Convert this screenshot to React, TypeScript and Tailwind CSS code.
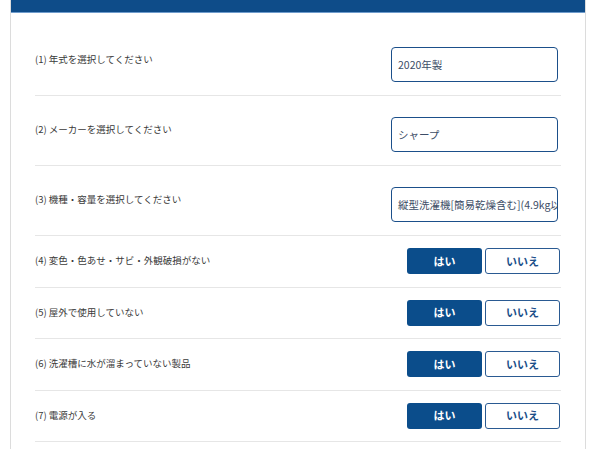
import React from "react";

const font = { fontFamily: '"Noto Sans CJK JP", "Noto Sans", sans-serif' };

function InputRow({ label, value }: { label: string; value: string }) {
  return (
    <div className="flex items-center justify-between border-b border-[#e6e6e6] pt-[12px] pb-[13px]">
      <div className="text-[9.5px] text-[#3a3a3a] leading-none">{label}</div>
      <div className="pt-[9px] pr-[3px]">
        <div className="w-[167px] h-[35px] border-[1.5px] border-[#1b4f8a] rounded-[4px] flex items-center pl-[6px] overflow-hidden">
          <span className="text-[10.5px] text-[#3d4d66] whitespace-nowrap">{value}</span>
        </div>
      </div>
    </div>
  );
}

function YesNoRow({ label }: { label: string }) {
  return (
    <div className="flex items-center justify-between border-b border-[#e6e6e6] pt-[12px] pb-[12.5px]">
      <div className="text-[9.5px] text-[#3a3a3a] leading-none">{label}</div>
      <div className="flex gap-[3px] pr-[1px]">
        <div className="w-[75px] h-[26px] bg-[#0b4d8b] rounded-[3px] flex items-center justify-center text-white text-[11px] font-bold">
          はい
        </div>
        <div className="w-[75px] h-[26px] border-[1.5px] border-[#2a5a92] rounded-[3px] bg-white flex items-center justify-center text-[#1b4f8a] text-[11px] font-bold">
          いいえ
        </div>
      </div>
    </div>
  );
}

export default function App() {
  return (
    <div className="w-[600px] h-[449px] bg-white overflow-hidden" style={font}>
      <div className="ml-[10px] w-[576px] h-full border-x border-[#dcdcdc] bg-white">
        <div className="h-[13px] bg-[#0e4c89] border-b border-[#6f9ccc]" />
        <div className="pl-[24px] pr-[24px] pt-[13px]">
          <InputRow label="(1) 年式を選択してください" value="2020年製" />
          <InputRow label="(2) メーカーを選択してください" value="シャープ" />
          <InputRow label="(3) 機種・容量を選択してください" value="縦型洗濯機[簡易乾燥含む](4.9kg以下)" />
          <YesNoRow label="(4) 変色・色あせ・サビ・外観破損がない" />
          <YesNoRow label="(5) 屋外で使用していない" />
          <YesNoRow label="(6) 洗濯槽に水が溜まっていない製品" />
          <YesNoRow label="(7) 電源が入る" />
        </div>
      </div>
    </div>
  );
}
